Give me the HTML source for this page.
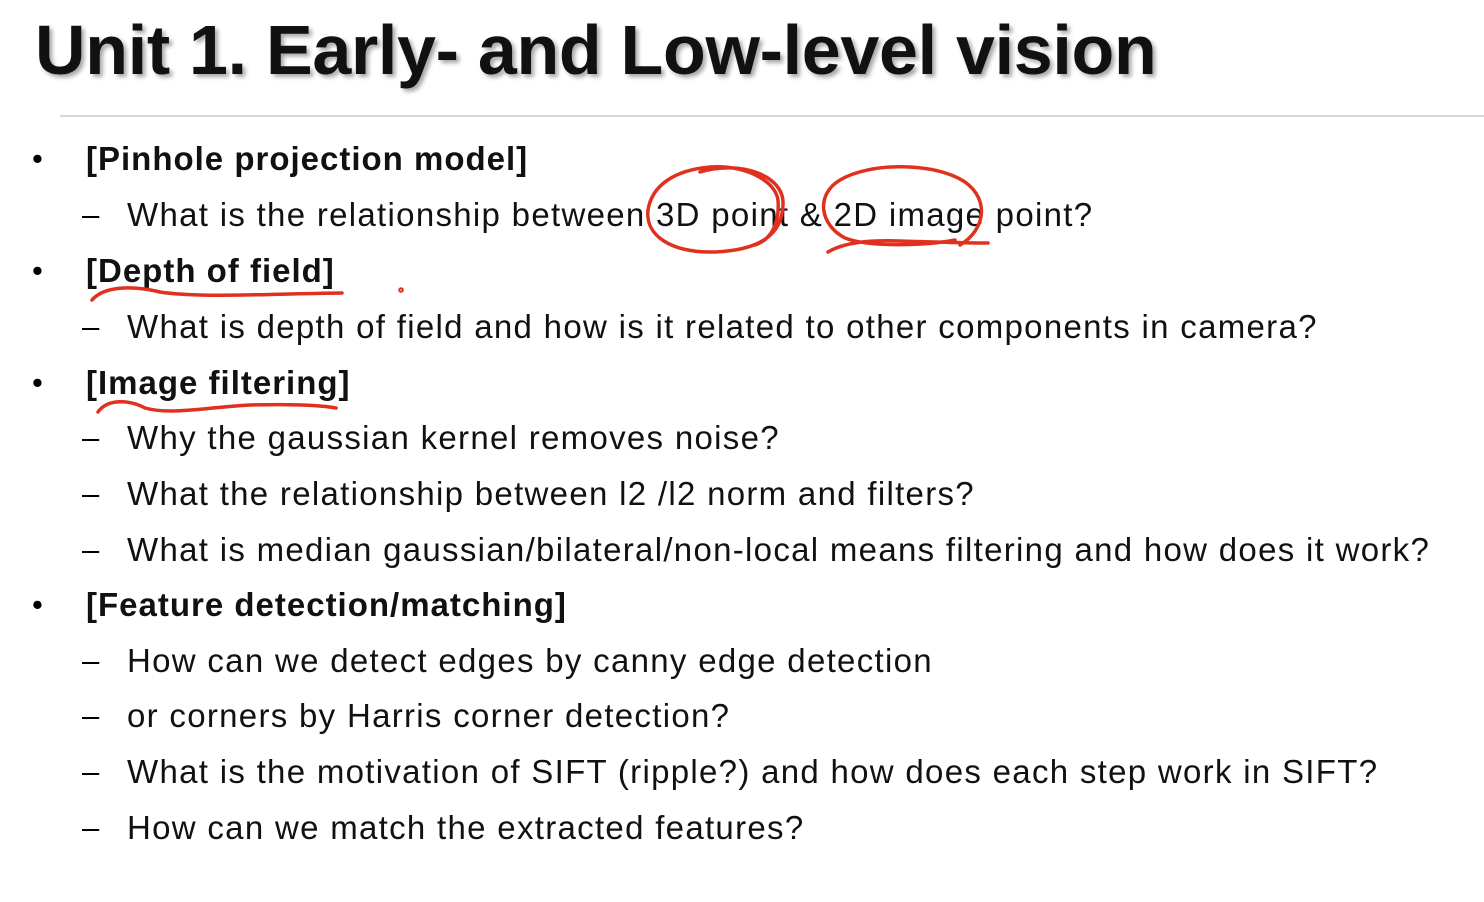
<!DOCTYPE html>
<html><head><meta charset="utf-8"><style>
html,body{margin:0;padding:0;background:#fff;width:1484px;height:902px;overflow:hidden;position:relative}
.t{position:absolute;left:35px;top:10px;font:bold 70px "Liberation Sans",sans-serif;color:#111;text-shadow:3px 3px 4px rgba(0,0,0,.35);white-space:nowrap;letter-spacing:-0.3px}
.hr{position:absolute;left:60px;top:115px;width:1424px;height:2px;background:#d8d8d8}
.l{position:absolute;font-family:"Liberation Sans",sans-serif;color:#111;white-space:nowrap;font-size:33px;line-height:40px;letter-spacing:1.3px}
.b{font-weight:bold;left:86px;letter-spacing:1px}
.s{left:127px}
.m{position:absolute;font:31px "Liberation Sans",sans-serif;line-height:40px}
svg{position:absolute;left:0;top:0}
</style></head><body>
<div class="t">Unit 1. Early- and Low-level vision</div>
<div class="hr"></div>

<div class="m" style="left:32px;top:139px">•</div><div class="l b" style="top:139px">[Pinhole projection model]</div>
<div class="m" style="left:82px;top:195px">–</div><div class="l s" style="top:195px">What is the relationship between 3D point &amp; 2D image point?</div>
<div class="m" style="left:32px;top:251px">•</div><div class="l b" style="top:251px">[Depth of field]</div>
<div class="m" style="left:82px;top:307px">–</div><div class="l s" style="top:307px">What is depth of field and how is it related to other components in camera?</div>
<div class="m" style="left:32px;top:363px">•</div><div class="l b" style="top:363px">[Image filtering]</div>
<div class="m" style="left:82px;top:418px">–</div><div class="l s" style="top:418px">Why the gaussian kernel removes noise?</div>
<div class="m" style="left:82px;top:474px">–</div><div class="l s" style="top:474px">What the relationship between l2 /l2 norm and filters?</div>
<div class="m" style="left:82px;top:530px">–</div><div class="l s" style="top:530px">What is median gaussian/bilateral/non-local means filtering and how does it work?</div>
<div class="m" style="left:32px;top:585px">•</div><div class="l b" style="top:585px">[Feature detection/matching]</div>
<div class="m" style="left:82px;top:641px">–</div><div class="l s" style="top:641px">How can we detect edges by canny edge detection</div>
<div class="m" style="left:82px;top:696px">–</div><div class="l s" style="top:696px">or corners by Harris corner detection?</div>
<div class="m" style="left:82px;top:752px">–</div><div class="l s" style="top:752px">What is the motivation of SIFT (ripple?) and how does each step work in SIFT?</div>
<div class="m" style="left:82px;top:808px">–</div><div class="l s" style="top:808px">How can we match the extracted features?</div>

<svg width="1484" height="902" fill="none" stroke="#e0301e" stroke-width="3.5" stroke-linecap="round">
<path d="M700 172 C740 160 785 175 783 205 C782 235 760 250 715 252 C670 253 645 235 648 210 C652 185 675 170 710 167 C745 165 775 180 778 200 C780 225 770 240 755 245"/>
<path d="M828 252 C845 242 870 240 900 241 C935 242 965 243 988 243"/>
<path d="M960 245 C985 230 990 200 965 182 C935 162 870 162 840 180 C815 195 820 225 845 238 C870 248 930 245 955 240"/>
<path d="M92 300 C105 285 135 286 160 292 C200 298 260 294 342 293"/>
<path d="M98 412 C108 398 130 400 145 408 C170 415 200 408 250 405 C290 404 320 405 336 408"/>
<circle cx="401" cy="290" r="1" />
</svg>
</body></html>
